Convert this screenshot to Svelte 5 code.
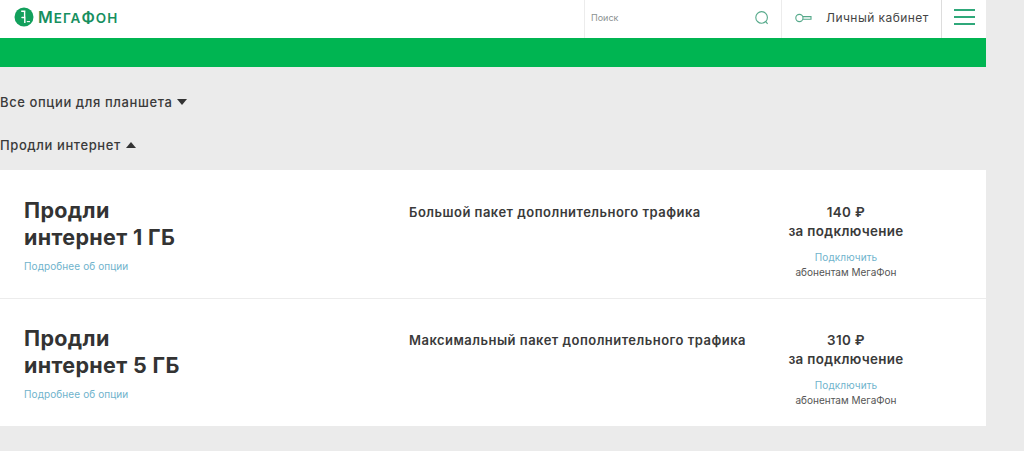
<script lang="ts">
    let options = [
        { title: "Продли", volume: "интернет 1 ГБ", text: "Большой пакет дополнительного трафика", price: 140 },
        { title: "Продли", volume: "интернет 5 ГБ", text: "Максимальный пакет дополнительного трафика", price: 310 },
    ];
</script>

<div class="page">
    <header class="topbar">
        <div class="logo">
            <svg width="20" height="20" viewBox="0 0 20 20">
                <circle cx="10" cy="10" r="9.5" fill="#12a05c" />
                <path d="M7.2 4.2h4.2M10.6 4.2v5c0 1.7-2.2 1.8-3 .8M10.8 9.6v6.4" fill="none" stroke="#fff" stroke-width="1.4" />
                <path d="M12.8 14.6h3.2" stroke="#fff" stroke-width="1.1" />
            </svg>
            <span class="logo-text"><b>М</b>ЕГА<b>Ф</b>ОН</span>
        </div>
        <div class="search">
            <span class="search-label">Поиск</span>
            <svg width="16" height="16" viewBox="0 0 16 16" fill="none" stroke="#55a98a" stroke-width="1.1">
                <circle cx="7.6" cy="7.4" r="5.8" />
                <path d="M11.8 11.6l1.8 2.2" />
            </svg>
        </div>
        <div class="cabinet">
            <svg width="17" height="10" viewBox="0 0 17 10" fill="none" stroke="#55a98a" stroke-width="1.1">
                <circle cx="4.4" cy="5" r="3.6" />
                <path d="M8 3.6h8v2.6h-8" />
            </svg>
            <span>Личный кабинет</span>
        </div>
        <button class="burger" aria-label="Меню"><i></i><i></i><i></i></button>
    </header>
    <div class="band"></div>

    <div class="toggle first">Все опции для планшета <span class="arrow down"></span></div>
    <div class="toggle second">Продли интернет <span class="arrow up"></span></div>

    <section class="list">
        {#each options as opt}
            <article class="row">
                <div class="name">
                    <h2>{opt.title}<br />{opt.volume}</h2>
                    <span class="link more">Подробнее об опции</span>
                </div>
                <div class="desc">{opt.text}</div>
                <div class="price">
                    <div class="sum">{opt.price} ₽</div>
                    <div class="sum">за подключение</div>
                    <div class="link connect">Подключить</div>
                    <div class="note">абонентам МегаФон</div>
                </div>
            </article>
        {/each}
    </section>
</div>

<style>
    :global(body) {
        background: #ebebeb;
    }

    .page {
        width: 986px;
        height: 451px;
        font-family: Inter, "Liberation Sans", sans-serif;
        color: #333;
    }

    .topbar {
        height: 38px;
        background: #fff;
        display: flex;
        align-items: stretch;
    }

    .logo {
        display: flex;
        align-items: center;
        gap: 4px;
        padding: 0 0 4px 14px;
        width: 570px;
    }

    .logo-text {
        font-size: 13.5px;
        font-weight: 600;
        color: #178f5f;
        letter-spacing: 1px;
    }

    .logo-text b {
        font-size: 16px;
        font-weight: 600;
    }

    .search {
        width: 198px;
        box-sizing: border-box;
        border-left: 1px solid #ececec;
        border-right: 1px solid #ececec;
        display: flex;
        align-items: center;
        justify-content: space-between;
        padding: 0 11px 3px 6px;
    }

    .search-label {
        font-size: 9px;
        color: #8b9191;
    }

    .cabinet {
        width: 159px;
        box-sizing: border-box;
        display: flex;
        align-items: center;
        gap: 14px;
        padding: 0 0 3px 13px;
        font-size: 12px;
        letter-spacing: 0.45px;
        color: #444;
        white-space: nowrap;
    }

    .burger {
        width: 45px;
        padding: 0 0 4px;
        border: 0;
        border-left: 1px solid #ddd;
        background: #fff;
        display: flex;
        flex-direction: column;
        align-items: center;
        justify-content: center;
        gap: 5px;
    }

    .burger i {
        display: block;
        width: 21px;
        height: 2px;
        background: #2fa87a;
    }

    .band {
        height: 29px;
        background: #00b552;
    }

    .toggle {
        font-size: 13px;
        font-weight: 500;
        letter-spacing: 0.6px;
        line-height: 16px;
        display: flex;
        align-items: center;
        gap: 5px;
        color: #3a3a3a;
    }

    .first {
        margin-top: 27px;
    }

    .second {
        margin-top: 27px;
    }

    .arrow {
        width: 0;
        height: 0;
        border-left: 5px solid transparent;
        border-right: 5px solid transparent;
    }

    .down {
        border-top: 6px solid #333;
    }

    .up {
        border-bottom: 6px solid #333;
    }

    .list {
        margin-top: 17px;
        background: #fff;
    }

    .row {
        height: 128px;
        box-sizing: border-box;
        display: flex;
        padding: 27px 0 0 24px;
    }

    .row + .row {
        box-shadow: inset 0 1px 0 #ececec;
    }

    .name {
        width: 385px;
    }

    h2 {
        margin: 0 0 3px;
        font-size: 21.5px;
        font-weight: 700;
        line-height: 27px;
        letter-spacing: 0.35px;
        color: #333;
    }

    .link {
        font-size: 10px;
        color: #6fb3cc;
        line-height: 14px;
        letter-spacing: 0.1px;
    }

    .desc {
        width: 362px;
        font-size: 13px;
        font-weight: 600;
        letter-spacing: 0.48px;
        line-height: 16px;
        color: #3a3a3a;
        margin-top: 7px;
    }

    .price {
        width: 150px;
        text-align: center;
        margin-top: 6px;
    }

    .sum {
        font-size: 13.4px;
        font-weight: 600;
        letter-spacing: 0.35px;
        line-height: 19px;
        color: #3a3a3a;
    }

    .connect {
        margin-top: 9px;
    }

    .note {
        font-size: 10px;
        line-height: 17px;
        color: #555;
    }
</style>
